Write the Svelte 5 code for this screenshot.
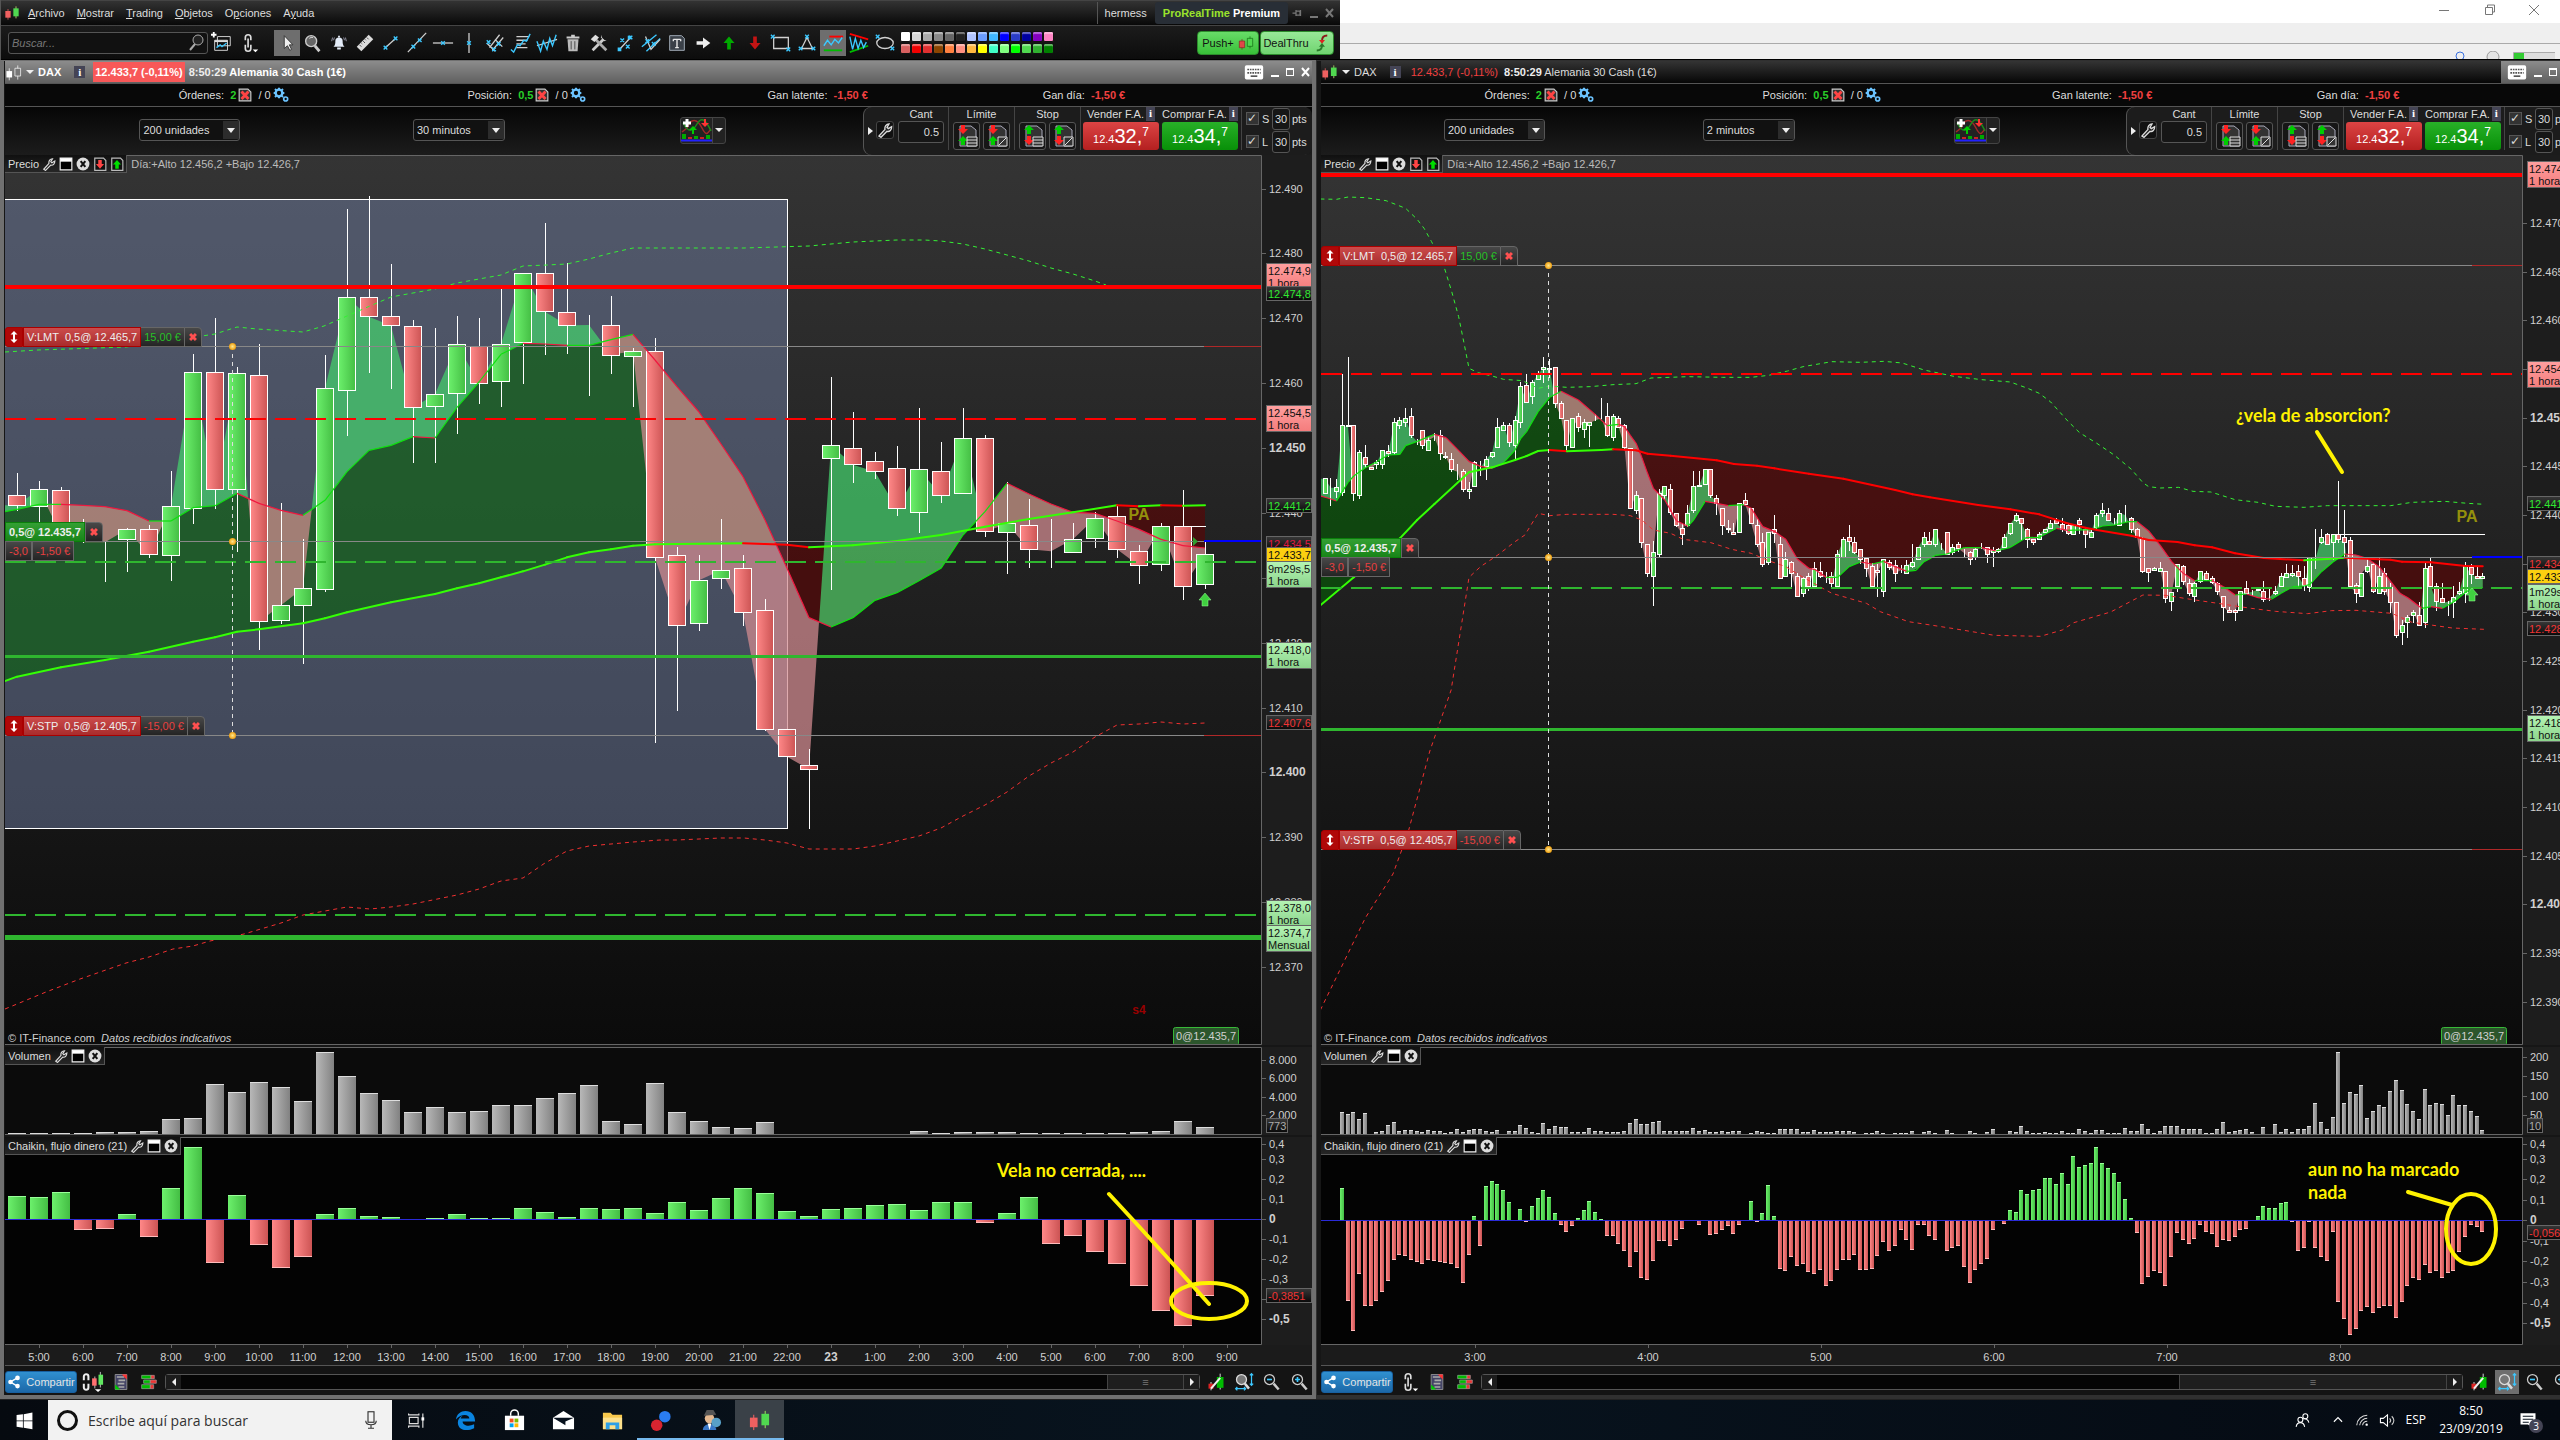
<script lang="ts">
	type Point = [number, number]
	type Candle = { high: number; top: number; bottom: number; low: number; dir: string }
	type Tag = { y: number; lines: string[]; kind: string }

	// Prices are kept in ticks, three to a pixel, counted down from BASE
	const BASE = 170
	const ty = (t: number) => BASE + t / 3

	const parseCandles = (text: string): Candle[] =>
		text
			.trim()
			.split(/\s*,\s*/)
			.map((row) => {
				const [h, t, b, l, dir] = row.trim().split(' ')
				return { high: +h, top: +t, bottom: +b, low: +l, dir }
			})

	const parsePoints = (text: string): Point[] =>
		text
			.trim()
			.split(/\s+/)
			.map((p) => p.split(',').map(Number) as Point)

	const parseNumbers = (text: string) => text.trim().split(/\s+/).map(Number)

	const shift = (list: Candle[], by: number) =>
		list.map((c) => ({ ...c, high: c.high + by, top: c.top + by, bottom: c.bottom + by, low: c.low + by }))

	function at(points: Point[], i: number) {
		if (i <= points[0][0]) return points[0][1]
		for (let k = 1; k < points.length; k++) {
			const [x1, y1] = points[k]
			const [x0, y0] = points[k - 1]
			if (i <= x1) return y0 + ((y1 - y0) * (i - x0)) / (x1 - x0)
		}
		return points[points.length - 1][1]
	}

	// Closed shapes between two curves, cut where they cross
	function between(xs: number[], a: number[], b: number[]) {
		const shapes: { up: boolean; d: string }[] = []
		let upper: string[] = []
		let lower: string[] = []
		let up = a[0] <= b[0]
		const close = () => {
			if (upper.length > 1) shapes.push({ up, d: 'M' + [...upper, ...lower.reverse()].join('L') + 'Z' })
			upper = []
			lower = []
		}
		for (let k = 0; k < xs.length; k++) {
			if (k > 0 && a[k] <= b[k] !== up) {
				const d0 = a[k - 1] - b[k - 1]
				const d1 = a[k] - b[k]
				const s = d0 / (d0 - d1)
				const x = xs[k - 1] + (xs[k] - xs[k - 1]) * s
				const y = a[k - 1] + (a[k] - a[k - 1]) * s
				upper.push(`${x},${y}`)
				close()
				up = !up
				upper.push(`${x},${y}`)
			}
			upper.push(`${xs[k]},${a[k]}`)
			lower.push(`${xs[k]},${b[k]}`)
		}
		close()
		return shapes
	}

	const leftCandles = parseCandles(`909 976 1006 1022 r,933 958 1010 1062 g,951 961 1095 1110 r,1047 1117 1117 1119 d,
1113 1117 1117 1235 d,1073 1078 1109 1206 g,1065 1078 1154 1163 r,903 1009 1157 1233 g,551 607 1015 1062 g,
444 607 959 1017 r,591 610 959 1146 g,521 616 1355 1440 r,999 1306 1352 1361 g,1107 1255 1307 1482 g,
555 655 1258 1266 g,117 382 661 798 g,78 382 440 609 r,282 439 467 657 r,450 469 713 879 r,474 673 710 879 g,
438 523 671 792 g,444 529 640 702 r,357 523 635 711 g,310 310 518 641 g,158 310 425 555 r,278 427 466 552 r,
435 465 465 678 d,378 465 554 612 r,535 544 560 711 g,504 544 1163 1719 r,1132 1156 1366 1623 r,
1155 1231 1361 1383 g,1047 1201 1225 1257 g,1155 1195 1328 1368 r,1287 1321 1678 1682 r,1678 1678 1760 1762 r,
1737 1786 1798 1977 r,621 826 866 1260 g,726 835 884 939 r,846 874 905 927 r,828 895 1016 1038 r,
714 898 1027 1088 g,816 904 976 999 r,714 805 970 970 g,795 805 1085 1101 r,936 1061 1087 1212 g,
987 1066 1138 1194 r,1047 1144 1144 1194 d,1059 1108 1147 1147 g,1027 1045 1105 1134 g,1009 1039 1138 1164 r,
1125 1144 1187 1242 r,1059 1070 1183 1203 g,960 1070 1249 1290 r,1111 1153 1244 1257 g`)

	const rightCandles = [
		...parseCandles(`924 926 970 970 g,924 953 953 1007 d,926 953 966 983 g,612 767 967 977 g,561 767 770 770 r,
767 767 970 992 r,841 848 976 987 g,825 862 884 895 r,890 891 898 900 r,870 878 884 896 g,840 842 884 898 g,
826 843 850 860 r,744 758 848 856 g,740 752 766 778 g,714 745 758 770 g,714 740 796 803 r,808 815 815 826 d,
780 781 826 838 r,800 811 841 843 g,788 800 800 812 d,780 796 849 870 r,845 858 861 866 r,850 868 899 907 r,
883 905 905 930 d,898 905 959 967 r,936 958 964 987 g,873 876 949 950 g,874 893 893 917 d,858 868 890 930 g,
845 848 861 865 g,744 772 832 835 g,757 766 780 782 g,760 767 818 832 r,739 752 827 870 g,636 650 758 773 g,
612 645 695 698 r,630 638 680 702 g,604 613 628 630 g,561 592 598 640 g,567 595 598 625 g,591 592 700 714 r,
694 700 745 748 r,750 752 827 843 r,744 746 832 835 g,730 740 772 785 r,748 758 780 803 g,755 758 766 832 g,
732 751 751 754 d,684 744 744 748 d,698 740 796 800 r,732 740 803 812 g,738 746 772 775 r,762 767 832 838 r,
835 836 1015 1018 r,963 976 1021 1032 g,985 986 1117 1135 r,1122 1123 1210 1222 r,1112 1148 1219 1307 g,
958 970 1153 1164 g,949 950 976 990 g,943 958 1028 1034 r,1030 1031 1066 1070 r,1060 1075 1092 1124 r,
1005 1030 1067 1070 g,904 949 1021 1030 g,904 945 948 949 g,896 899 943 946 g,897 899 976 983 r,
976 986 1000 1034 r,1014 1015 1066 1096 r,1050 1076 1079 1088 r,1060 1088 1093 1094 r,1000 1001 1088 1088 g,
969 991 1004 1006 r,1014 1015 1060 1062 r,1045 1066 1123 1130 r,1090 1118 1184 1190 r,1086 1088 1177 1185 g,
1035 1079 1090 1120 r,1102 1122 1225 1226 r,1147 1168 1219 1222 g,1173 1177 1210 1256 r,1210 1220 1279 1280 r,
1222 1225 1271 1280 g,1210 1219 1250 1264 r,1176 1195 1250 1250 g,1175 1205 1219 1225 r,1205 1222 1222 1240 d,
1205 1220 1241 1250 r,1140 1153 1249 1250 g,1101 1109 1162 1165 g,1065 1103 1116 1143 r,1102 1118 1147 1153 r,
1137 1138 1168 1183 r,1162 1164 1195 1222 r,1178 1190 1250 1252 r,1183 1200 1205 1280 r,1167 1168 1265 1280 g,
1169 1178 1192 1200 r,1170 1186 1210 1235 r,1186 1200 1200 1208 d,1170 1185 1210 1211 g,1122 1178 1190 1193 g,
1130 1132 1168 1170 g,1086 1103 1124 1132 g,1087 1115 1124 1125 r,1077 1079 1123 1130 g`),
		...shift(
			parseCandles(`640 650 650 660 d,606 607 672 675 r,642 652 668 676 g,636 644 656 665 r,657 670 670 680 d,
664 667 688 704 r,655 658 682 690 g,640 653 653 657 d,651 653 673 698 r,652 660 666 710 g,655 658 665 668 r,
612 622 652 655 g,579 581 612 614 g,548 557 572 575 g,563 566 580 632 r,595 598 628 654 r,627 629 637 644 r,
605 613 628 630 g,596 598 608 610 g,570 580 595 596 g,563 572 580 582 r,564 582 598 606 r,580 585 608 614 r,
583 586 612 614 g,564 572 584 612 r,590 598 614 654 r,596 607 622 624 g,548 557 594 598 g,519 542 550 560 g,
534 550 570 572 r,565 582 582 584 d,540 550 586 587 g,525 556 556 575 d,562 565 598 608 r,594 597 620 623 r,
620 625 724 730 r,714 716 728 755 r,712 716 722 724 g,696 715 724 726 g,724 725 806 818 r,785 786 814 842 g,
702 704 770 786 g,706 710 754 764 r,747 760 790 798 r,755 760 798 815 g,724 725 755 760 g,724 731 748 753 r,
738 745 758 762 r,756 760 784 794 r,797 799 832 872 r,832 842 847 850 r,836 842 848 872 r,782 785 841 842 g,
752 775 790 793 r,780 785 785 797 d,774 778 782 784 g,752 785 808 815 r,775 802 802 812 d,768 784 791 794 g,
729 740 770 772 g,702 731 744 745 g,704 731 738 740 g,706 724 740 770 r,708 746 768 784 r,682 683 774 786 g,
597 685 685 716 d,597 622 636 642 g,608 613 643 645 r,613 614 637 690 g,453 614 629 640 r,540 622 636 682 r,
622 630 769 772 r,758 767 790 818 r,728 730 798 800 g,688 709 725 730 g,700 704 784 790 r,684 740 790 792 g,
715 730 784 794 r,760 773 817 850 r,816 818 916 923 r,870 886 907 944 g,855 863 878 923 g,840 848 856 880 g,
817 856 887 888 r,697 715 878 893 g,684 710 770 772 r,760 770 815 842 r,760 806 818 820 r,812 815 815 858 d,
768 803 818 864 g,755 784 790 794 g,697 710 790 818 g,702 711 731 762 r,709 740 745 748 r,729 739 745 746 g`),
			480
		)
	]

	const charts = [
		{
			name: 'left',
			active: true,
			x: 5,
			right: 1261,
			width: 1307,
			x0: 17,
			step: 22,
			half: 9,
			frame: '30 minutos',
			candles: leftCandles,
			fast: parsePoints(`-.55,1025 0,1018 1,1003 2,1003 3,1006 4,1010 5,1022 6,1053 7,1053 8,1013 9,1007 10,970
11,1000 12,1021 13,1036 14,991 15,905 16,841 17,826 18,800 19,804 20,712 21,636 22,553 23,520 24,522 25,526
26,526 27,509 28,493 29,570 30,650 31,726 32,822 33,920 34,1050 35,1195 36,1343 37,1371 38,1343 39,1291
40,1268 41,1232 42,1195 43,1095 44,1025 45,940 46,972 47,1002 48,1027 49,1030 50,1053 51,1078 52,1108
53,1127 54,1134`),
			slow: parsePoints(`-.55,1533 0,1520 2,1492 4,1470 6,1445 8,1415 9,1402 10,1385 11,1378 13,1360 14,1345
15,1327 17,1297 19,1272 20,1255 21,1240 22,1222 23,1204 24,1184 25,1162 26,1147 27,1138 28,1127 29,1123
31,1121 33,1120 34,1122 35,1124 36,1132 38,1126 40,1113 42,1095 44,1070 46,1047 48,1027 50,1006 51,1009
52,1006 53,1007 54,1006`),
			upper: `5,352 38,350 126,347 202,336 215,334 237,327 257,329 303,332 324,326 347,316 370,306 391,297
435,289 457,283 501,275 523,266 547,265 567,264 589,259 611,253 633,248 744,248 809,246 853,242 897,240
924,240 941,241 963,244 985,249 1007,255 1029,261 1051,268 1073,274 1095,281 1106,285`,
			lower: `5,1009 46,992 80,979 126,963 149,957 173,949 193,946 210,941 244,934 281,923 303,915 325,911
347,907 370,909 391,907 413,904 457,895 479,889 501,881 523,878 545,863 567,851 589,846 611,844 633,842
660,840 677,840 699,839 721,838 744,838 765,840 787,843 809,849 853,849 875,846 897,841 919,836 941,828
963,816 985,805 1007,792 1029,776 1051,763 1073,752 1095,737 1117,725 1139,724 1161,722 1183,724 1205,723`,
			levels: [
				{ y: 287, color: '#f00', w: 4, dash: '' },
				{ y: 419, color: '#f00', w: 2, dash: '21 9' },
				{ y: 562, color: '#2fb62f', w: 2, dash: '21 9' },
				{ y: 656.5, color: '#2fb62f', w: 3, dash: '' },
				{ y: 915, color: '#2fb62f', w: 2, dash: '21 9' },
				{ y: 937.5, color: '#2fb62f', w: 5, dash: '' }
			],
			orders: [346, 541, 735],
			orderX: 232,
			lastX: 1204,
			high: [1192, 526, 1206],
			axis: [
				[189, '12.490'], [253, '12.480'], [318, '12.470'], [383, '12.460'], [448, '12.450', 'b'],
				[513, '12.440'], [578, ''], [643, '12.420'], [708, '12.410'], [772, '12.400', 'b'], [837, '12.390'],
				[902, '12.380'], [967, '12.370']
			],
			tags: [
				{ y: 263, lines: ['12.474,9', '1 hora'], kind: 'pink' },
				{ y: 286, lines: ['12.474,8'], kind: 'dark-green' },
				{ y: 405, lines: ['12.454,5', '1 hora'], kind: 'pink' },
				{ y: 498, lines: ['12.441,2'], kind: 'dark-green' },
				{ y: 536, lines: ['12.434,5'], kind: 'dark-crimson' },
				{ y: 561, lines: ['9m29s,5', '1 hora'], kind: 'green' },
				{ y: 547, lines: ['12.433,7'], kind: 'yellow' },
				{ y: 642, lines: ['12.418,0', '1 hora'], kind: 'green' },
				{ y: 715, lines: ['12.407,6'], kind: 'dark-red' },
				{ y: 900, lines: ['12.378,0', '1 hora'], kind: 'green' },
				{ y: 925, lines: ['12.374,7', 'Mensual'], kind: 'green' }
			] as Tag[],
			pa: [1139, 520],
			arrow: [1205, 593],
			zeroBox: 1173,
			volume: parseNumbers(`4 4 4 4 7 7 10 46 48 150 127 156 142 99 246 174 123 102 66 81 66 69 87 87 108 123 147
39 30 153 66 39 21 18 36 0 0 0 0 0 0 10 4 7 7 7 4 4 4 4 4 7 10 39 21`),
			volumeAxis: [[1060, '8.000'], [1078, '6.000'], [1097, '4.000'], [1115, '2.000']],
			volumeTag: '773',
			zero: 1219,
			flow: parseNumbers(`69 67 81 -32 -29 15 -55 93 216 -133 72 -79 -146 -113 15 33 9 6 0 4 15 4 4 33 21 6 33 30
33 18 51 27 63 93 78 24 9 30 33 42 45 27 51 51 -13 18 66 -76 -52 -100 -136 -200 -275 -322 -232`),
			flowAxis: [
				[1144, '0,4'], [1159, '0,3'], [1179, '0,2'], [1199, '0,1'], [1219, '0', 'b'], [1239, '-0,1'],
				[1259, '-0,2'], [1279, '-0,3'], [1299, ''], [1319, '-0,5', 'b']
			],
			flowTag: { y: 1288, lines: ['-0,3851'], kind: 'dark-red' },
			first: 0,
			times: [
				'5:00', '6:00', '7:00', '8:00', '9:00', '10:00', '11:00', '12:00', '13:00', '14:00', '15:00', '16:00',
				'17:00', '18:00', '19:00', '20:00', '21:00', '22:00', '23', '1:00', '2:00', '3:00', '4:00', '5:00',
				'6:00', '7:00', '8:00', '9:00'
			].map((t, i) => [39 + i * 44, t]),
			thumb: 77
		},
		{
			name: 'right',
			active: false,
			x: 1321,
			right: 2522,
			width: 1254,
			x0: 1325,
			step: 5.76,
			half: 2,
			frame: '2 minutos',
			candles: rightCandles,
			fast: parsePoints(`-.8,978 .5,984 2,993 3,965 4,937 5,918 7,893 9,875 11,855 13,853 14,827 16,814 19,793
21,803 23,838 25,874 27,889 29,895 31,878 33,840 34,805 35,785 37,725 39,682 41,664 44,690 46.5,727 49,767
51,763 52,770 53,796 54,820 55,862 56,910 57,955 59,990 61,1052 63,1069 64,1050 66,994 68,1000 70,1007
72.7,1004 74,1015 76,1070 78,1084 80,1108 82,1167 84,1195 85,1198 87,1222 89,1222 91,1190 93,1176 95,1182
97,1174 99,1190 101,1204 102.6,1201 104,1175 105,1166 106,1156 108,1152 111,1133 114,1133 116.5,1143
119,1132 121.7,1103 124,1102 127,1075 129,1081 133,1079 135,1068 137,1065 139.5,1055 141,1055 143,1083
145,1126 147,1175 149,1210 151,1232 154,1232 156,1250 158,1275 160,1272 162,1283 164.3,1288 166,1270
168,1250 170,1248 171,1243 173,1205 175,1176 177,1152 179,1155 181,1166 183,1190 185,1234 186.6,1270
188,1283 190.4,1315 192,1310 194,1315 196,1295 198,1267 199,1256 201,1253`),
			slow: parsePoints(`-.8,1306 5,1222 13,1105 16,1050 19,1002 25,907 29,892 33,870 35,858 37,843 39,840
42,844 48,840 50,838 52,839 54,841 56,851 60,857 68,871 71,882 75,887 78,895 84,911 90,926 95,945 99,960
102,973 105,982 113.4,1005 119,1018 124,1033 128.7,1059 132,1073 134,1080 140,1097 143,1110 148,1116
151,1126 154,1132 158,1150 163,1164 170,1171 174,1167 177,1163 182,1167 185,1169 187,1175 192,1177
198,1188 201,1189`),
			upper: '',
			lower: '',
			upperPoints: parsePoints(`-.8,87 2,88 4,81 7,83 10.6,92 14,115 16,148 17.2,175 18.5,215 20.7,292 22,365
23.2,440 24.2,525 25,595 26.6,608 29,618 31,628 34.3,632 37,655 39,648 42,652 46,650 50,644 54,641
56.6,624 63,620 69,622 74,622 77,616 80.3,603 83,590 88,575 93,577 97,574 100.2,579 104,600 109.2,619
114,629 119,636 122,655 124,670 126,696 129,754 131,788 134,820 137,855 140,898 142,938 143,950 145,954
148.2,952 150.7,964 153.8,966 158,989 162,997 165,1009 170,1012 174,1007 185,1007 188.7,997 194.3,994
198.4,1000 201.3,1003`),
			lowerPoints: parsePoints(`-.8,2520 7,2244 11.8,2112 14.4,1989 18.2,1743 21.9,1560 25,1222 27,1190 30,1155
33,1115 34.7,1095 37,1030 39,1037 42,1033 50,1033 53,1037 55,1050 57,1080 60,1090 62.2,1108 67,1118
70.6,1138 74,1150 77,1172 80,1190 83,1222 88,1270 94,1300 96.4,1325 101.3,1355 105.5,1366 109.2,1376
116.2,1396 124.2,1399 128,1380 130,1358 136.4,1326 142,1275 146,1276 150.3,1288 155,1300 160.8,1315
165,1324 170.6,1331 174.7,1322 179,1321 185.2,1330 188.7,1357 195.7,1374 201.3,1378`),
			levels: [
				{ y: 175, color: '#f00', w: 4, dash: '' },
				{ y: 374, color: '#f00', w: 2, dash: '21 9' },
				{ y: 588, color: '#2fb62f', w: 2, dash: '21 9' },
				{ y: 729.5, color: '#2fb62f', w: 3, dash: '' }
			],
			orders: [265, 557, 849],
			orderX: 1548,
			lastX: 2472,
			high: [2333, 534, 2485],
			axis: [
				[223, '12.470'], [272, '12.465'], [320, '12.460'], [369, ''], [418, '12.450', 'b'], [466, '12.445'],
				[515, '12.440'], [564, ''], [612, '12.430'], [661, '12.425'], [710, '12.420'], [758, '12.415'],
				[807, '12.410'], [856, '12.405'], [904, '12.400', 'b'], [953, '12.395'], [1002, '12.390']
			],
			tags: [
				{ y: 161, lines: ['12.474,9', '1 hora'], kind: 'pink' },
				{ y: 361, lines: ['12.454,5', '1 hora'], kind: 'pink' },
				{ y: 496, lines: ['12.441,0'], kind: 'dark-green' },
				{ y: 556, lines: ['12.434,6'], kind: 'dark-red' },
				{ y: 584, lines: ['1m29s,5', '1 hora'], kind: 'green' },
				{ y: 569, lines: ['12.433,7'], kind: 'yellow' },
				{ y: 621, lines: ['12.428,3'], kind: 'dark-red' },
				{ y: 715, lines: ['12.418,0', '1 hora'], kind: 'green' }
			] as Tag[],
			pa: [2467, 522],
			arrow: [2472, 588],
			zeroBox: 2441,
			volume: parseNumbers(`67 60 67 46 63 0 6 10 27 36 10 13 13 10 7 13 10 10 4 7 16 6 12 15 15 10 7 12 0 9 9 28
18 7 4 33 16 24 21 21 7 7 7 18 10 10 7 7 7 10 33 45 30 30 36 39 10 10 10 10 10 18 10 12 6 7 10 7 10 10 0 4
10 7 4 4 15 15 15 15 7 7 13 7 7 7 10 9 10 7 0 4 4 10 4 0 4 4 4 10 0 7 10 4 0 12 4 0 0 10 4 0 7 15 0 0 10 7
24 10 4 4 7 4 4 10 4 4 15 10 4 13 12 4 4 4 18 10 10 30 15 4 10 25 25 25 16 15 15 15 4 4 15 36 7 10 13 15 7
0 22 0 30 7 15 7 15 15 24 94 36 15 51 246 94 127 121 148 49 70 87 82 130 162 132 90 70 45 135 87 93 90 57
118 87 87 70 55 12`),
			volumeAxis: [[1057, '200'], [1076, '150'], [1096, '100'], [1115, '50']],
			volumeTag: '10',
			zero: 1220,
			flow: parseNumbers(`97 -244 -334 -163 -259 -259 -244 -217 -184 -121 -106 -109 -121 -127 -133 -121 -124 -127
-130 -133 -145 -190 -106 13 -79 103 118 109 91 55 0 34 -7 43 67 91 70 22 -16 -37 -19 7 31 58 25 3 -49 -49
-73 -94 -142 -97 -175 -181 -124 -64 -64 -79 -61 -28 -4 -4 -16 -4 -46 -43 -31 -19 -43 -16 0 58 -7 22 106 13
-148 -154 -112 -139 -133 -157 -163 -151 -199 -184 -151 -121 -121 -106 -151 -151 -148 -109 -67 -94 -79 -31
-61 -91 -16 -16 -49 -61 0 -94 -85 -79 -142 -190 -151 -133 -118 -31 0 -13 31 25 91 79 91 94 127 127 109 142
109 193 160 166 172 220 172 157 142 115 64 7 -40 -193 -172 -154 -160 -199 -112 -40 -61 -73 -58 -16 -37 -43
-82 -61 -64 -52 -31 -28 -4 13 43 37 37 52 55 -7 -94 -85 -7 -85 -112 -124 -37 -247 -298 -346 -328 -274 -262
-280 -265 -259 -259 -295 -247 -199 -175 -181 -136 -160 -154 -175 -160 -154 -97 -52 -16 -22 -37`),
			flowAxis: [
				[1144, '0,4'], [1159, '0,3'], [1179, '0,2'], [1200, '0,1'], [1220, '0', 'b'], [1241, '-0,1'],
				[1261, '-0,2'], [1282, '-0,3'], [1303, '-0,4'], [1323, '-0,5', 'b']
			],
			flowTag: { y: 1225, lines: ['-0,0561'], kind: 'dark-red' },
			first: 3,
			times: ['3:00', '4:00', '5:00', '6:00', '7:00', '8:00'].map((t, i) => [1475 + i * 173, t]),
			thumb: 268
		}
	].map((c: any) => {
		const cx = (i: number) => c.x0 + c.step * i
		const idx = [-0.7, ...c.candles.map((_: Candle, i: number) => i)]
		const closes = c.candles.map((k: Candle) => (k.dir === 'r' ? k.bottom : k.top))
		const price = [closes[0], ...closes].map(ty)
		const fast = idx.map((i) => ty(at(c.fast, i)))
		const slow = idx.map((i) => ty(at(c.slow, i)))
		const xs = idx.map((i) => Math.max(c.x, cx(i)))
		const page = (p: Point[]) => p.map(([i, t]) => [cx(i), ty(t)])
		const join = (p: Point[]) => page(p).map((q) => q.join(',')).join(' ')
		return {
			...c,
			cx,
			trend: between(xs, fast, slow),
			swing: between(xs, price, fast),
			fastLine: page(c.fast),
			slowLine: page(c.slow),
			upper: c.upperPoints ? join(c.upperPoints) : c.upper,
			lower: c.lowerPoints ? join(c.lowerPoints) : c.lower
		}
	})

	const menus = ['Archivo', 'Mostrar', 'Trading', 'Objetos', 'Opciones', 'Ayuda']
	const hotkeys = [0, 0, 0, 0, 1, 1]

	const palette = [
		'#fff', '#d8d8d8', '#aaa', '#888', '#666', '#222', '#b0c4ff', '#6a9cff', '#40b8ff', '#00f', '#2a3cc8', '#0000a0',
		'#8400c0', '#ff84c4', '#d86060', '#f00000', '#e03030', '#8a4400', '#ff8040', '#ff9080', '#ffb840', '#ffff00',
		'#40ffc8', '#80ff80', '#00ff00', '#50d850', '#30b030', '#008000'
	]

	const cross = (x: number, y: number) => `M${x - 2} ${y - 2}l4 4m0-4l-4 4`
	const blue = 'stroke="#3cc8ff" stroke-width="1.5" fill="none"'
	const grey = 'stroke="#d0d0d0" stroke-width="1.4" fill="none"'
	const icons: Record<string, string> = {
		cursor: '<path d="M9 4v14l3.500-3 2.500 5 2-1-2.500-5h4z" fill="#eee" stroke="#333"/>',
		lens: '<circle cx="10" cy="10" r="6" fill="#666" stroke="#ccc" stroke-width="1.500"/><path d="M8 7a4 4 0 0 1 4-1" stroke="#ddd" fill="none"/><path d="M14 15l5 6" stroke="#ccc" stroke-width="3"/>',
		bell: '<path d="M6 16c2-2 2-4 2-6a4 4 0 0 1 8 0c0 2 0 4 2 6z" fill="#e4ecf8"/><path d="M10 18h4M12 4v2" stroke="#e4ecf8" stroke-width="2"/><path d="M5 6l-1 4m2-1l1-3m12 0l1 4m-2-1l-1-3" stroke="#99a" fill="none"/>',
		ruler: '<path d="M3 16L16 3l5 5L8 21z" fill="#ddd"/><path d="M6 14l2 2m0-4l1 1m1-3l2 2m0-4l1 1m1-3l2 2" stroke="#444"/>',
		segment: `<path d="M6 17L17 7" ${grey}/><path d="${cross(6, 17)}${cross(17, 7)}" ${blue}/>`,
		ray: `<path d="M2 22L22 1" ${grey}/><path d="${cross(8, 16)}${cross(15, 9)}" ${blue}/>`,
		hline: `<path d="M1 12h22" ${grey}/><path d="${cross(12, 12)}" ${blue}/>`,
		vline: `<path d="M12 1v22" ${grey}/><path d="${cross(12, 12)}" ${blue}/>`,
		fork: `<path d="M6 17L17 3M9 20L21 6M3 12l9 9M12 8l8 8" ${grey}/><path d="${cross(5, 11)}${cross(11, 19)}${cross(16, 13)}" ${blue}/>`,
		regress: `<path d="M7 5h14M7 9h12M7 13h10M7 17h12" ${grey}/><path d="M1 19l3 3 4-8 3 1 4-6 3 1 4-8" ${blue}/>`,
		waves: `<path d="M1 15L23 8" ${grey}/><path d="M1 10l4 11 3-11 4 9 3-12 3 8 4-12" ${blue}/>`,
		trash: '<path d="M6 8h12l-1 13H7z" fill="#bbb"/><path d="M5 6h14M10 4h4" stroke="#ccc" stroke-width="2"/><path d="M10 10v9m4-9v9" stroke="#444"/>',
		tools: '<path d="M5 20L17 8" stroke="#ccc" stroke-width="3"/><path d="M15 3a5 5 0 0 0 6 6l-3 1-4-4z" fill="#ccc"/><path d="M8 8l12 12" stroke="#aaa" stroke-width="3"/><path d="M3 8l5-5 4 3-5 5z" fill="#ddd"/>',
		handles: `<path d="M7 18L18 6" ${grey}/><path d="${cross(9, 9)}${cross(15, 16)}${cross(18, 6)}" ${blue}/><path d="M4 17h4v4H4zM15 4h4v4h-4z" fill="#3cc8ff"/>`,
		channel: `<path d="M2 16L18 3M7 21L22 7" ${blue}/><path d="M6 5l6 14 10-11" ${grey}/><path d="${cross(8, 10)}${cross(15, 13)}" ${blue}/>`,
		text: '<path d="M4 4h13l3 3v13H4z" fill="#3a4048" stroke="#a8b4c0"/><path d="M8 8h8M12 8v9M10 17h4M8 8v2m8-2v2" stroke="#e8e8e8" stroke-width="1.500"/>',
		right: '<path d="M5 10h7V6l8 6-8 6v-4H5z" fill="#eee"/>',
		up: '<path d="M12 5l6 7h-4v7h-4v-7H6z" fill="#0a0"/>',
		down: '<path d="M12 19l6-7h-4V5h-4v7H6z" fill="#c41414"/>',
		box: `<path d="M4 6h16v12H4z" ${grey}/><path d="${cross(3, 5)}${cross(20, 19)}" ${blue}/>`,
		triangle: `<path d="M12 6l6 12H6z" ${grey}/><path d="${cross(12, 5)}${cross(5, 18)}${cross(19, 18)}" ${blue}/>`,
		pattern: '<path d="M8 5h15" stroke="#f00" stroke-width="2"/><path d="M2 20h20" stroke="#0b0" stroke-width="2"/><path d="M2 15l4-6 4 5 4-6 4 4 4-6" stroke="#3cc8ff" stroke-width="1.500" fill="none"/>',
		wedge: '<path d="M2 2l20 6" stroke="#f00" stroke-width="2"/><path d="M2 22l20-7" stroke="#0b0" stroke-width="2"/><path d="M2 5l3 14 3-12 3 11 3-9 3 8 3-6" stroke="#3cc8ff" stroke-width="1.500" fill="none"/>',
		ellipse: `<ellipse cx="12" cy="12" rx="9" ry="6" ${grey}/><path d="${cross(4, 5)}${cross(20, 18)}" ${blue}/>`,
		windows: '<path d="M7 5h14v10H7zM4 9h14v11H4z" fill="#111" stroke="#ddd"/><path d="M4 10h14" stroke="#ddd" stroke-width="2"/><path d="M6 17l4-3 2 2 5-4" stroke="#3cc8ff" fill="none" stroke-width="1.500"/><path d="M3 0v6M0 3h6" stroke="#fff" stroke-width="2"/>',
		link: '<path d="M8 9V6a3 3 0 0 1 6 0v3M8 14v4a3 3 0 0 0 6 0v-4M11 7v10" fill="none" stroke="#ddd" stroke-width="1.800"/><path d="M16 19h6l-3 3z" fill="#fff"/>',
		linkCandles: '<path d="M2 10V6a2.500 2.500 0 0 1 5 0v4M2 14v4a2.500 2.500 0 0 0 5 0v-4" fill="none" stroke="#eee" stroke-width="2.200"/><path d="M14 6v13M20 1v17" stroke="#ccc"/><path d="M11 8h5v8h-5z" fill="#ff7070"/><path d="M18 4h5v11h-5z" fill="#60e860"/><path d="M14 20h7l-3.500 3z" fill="#fff"/>',
		candles: '<path d="M6 6v16M18 2v18" stroke="#f66"/><path d="M18 2v18" stroke="#5d5"/><path d="M2 9h8v10H2z" fill="#f06060"/><path d="M14 5h8v12h-8z" fill="#50d850"/>',
		candlesPush: '<path d="M6 6v16" stroke="#822"/><path d="M18 2v18" stroke="#161"/><path d="M2 9h8v10H2z" fill="#e04848" stroke="#822"/><path d="M14 5h8v12h-8z" fill="#50d850" stroke="#161"/>',
		candlesWhite: '<path d="M6 6v17M18 2v20" stroke="#fff"/><path d="M2 10h8v9H2z" fill="#fff"/><path d="M14 6h8v11h-8z" fill="#777" stroke="#fff"/>',
		share: '<path d="M19 4L6 12l13 8" fill="none" stroke="#fff" stroke-width="2.500"/><circle cx="18" cy="5" r="4" fill="#fff"/><circle cx="6" cy="12" r="4" fill="#fff"/><circle cx="18" cy="19" r="4" fill="#fff"/>',
		wrench: '<path d="M3 21l9-10c-1-4 2-8 6-8l-3 5 2 2 5-3c0 5-3 8-7 7L6 23z" fill="#222" stroke="#ddd" stroke-width="2"/>',
		pane: '<path d="M2 2h20v20H2z" fill="#000" stroke="#eee" stroke-width="2"/><path d="M2 5h20" stroke="#fff" stroke-width="6"/>',
		closePane: '<circle cx="12" cy="12" r="11" fill="#ddd"/><path d="M8 7l8 10m0-10L8 17" stroke="#111" stroke-width="3.500"/>',
		sellDoc: '<path d="M3 2h15l4 4v17H3z" fill="#111" stroke="#bbb" stroke-width="2"/><path d="M12 20l7-8h-4V5H9v7H5z" fill="#f44"/>',
		buyDoc: '<path d="M3 2h15l4 4v17H3z" fill="#111" stroke="#bbb" stroke-width="2"/><path d="M12 5l7 8h-4v7H9v-7H5z" fill="#0d0"/>',
		cancel: '<path d="M2 2h15l5 5v15H2z" fill="#333" stroke="#ccc" stroke-width="2"/><path d="M6 6l12 13m0-13L6 19" stroke="#f44" stroke-width="5"/>',
		gears: '<circle cx="9" cy="9" r="5" fill="none" stroke="#6cc4ff" stroke-width="3.500"/><path d="M9 1v3m0 10v3M1 9h3m10 0h3M3 3l2 2m8 8l2 2m0-12l-2 2M3 15l2-2" stroke="#6cc4ff" stroke-width="3"/><circle cx="19" cy="18" r="3" fill="none" stroke="#6cc4ff" stroke-width="2.500"/>',
		limitA: '<path d="M5 2h11l5 4v16H5z" fill="#333" stroke="#aab"/><path d="M8 10l5-5h-3V1H6v4H3z" fill="#f22"/><path d="M8 12l5 5h-3v4H6v-4H3z" fill="#0c0"/><path d="M12 13h10v9H12zM12 16h10M12 19h10" fill="#333" stroke="#ddd"/>',
		limitB: '<path d="M5 2h11l5 4v16H5z" fill="#333" stroke="#aab"/><path d="M8 10l5-5h-3V1H6v4H3z" fill="#f22"/><path d="M8 12l5 5h-3v4H6v-4H3z" fill="#0c0"/><path d="M13 13h9v9h-9zM14 21l7-7" fill="#333" stroke="#ddd"/>',
		stopA: '<path d="M5 2h11l5 4v16H5z" fill="#333" stroke="#aab"/><path d="M8 1l5 5h-3v4H6V6H3z" fill="#0c0"/><path d="M8 21l5-5h-3v-4H6v4H3z" fill="#f22"/><path d="M12 13h10v9H12zM12 16h10M12 19h10" fill="#333" stroke="#ddd"/>',
		stopB: '<path d="M5 2h11l5 4v16H5z" fill="#333" stroke="#aab"/><path d="M8 1l5 5h-3v4H6V6H3z" fill="#0c0"/><path d="M8 21l5-5h-3v-4H6v4H3z" fill="#f22"/><path d="M13 13h9v9h-9zM14 21l7-7" fill="#333" stroke="#ddd"/>',
		indicator: '<path d="M1 14L6 10c4-10 10-10 15 0s6 4 9 1" fill="none" stroke="#a02828" stroke-width="1.500"/><path d="M2 5c6 11 10 8 14 1s8-6 14 7" fill="none" stroke="#1a8a1a" stroke-width="1.500"/><path d="M6 1v8M2 5h8" stroke="#fff" stroke-width="3"/><path d="M24 9l4-4h-3V1h-2v4h-3z" fill="#f33"/><path d="M12 8l4 4h-3v4h-2v-4H8z" fill="#0c0"/><path d="M1 16h4v5H1zM13 18h4v3h-4zM25 17h4v4h-4z" fill="#0a0"/><path d="M7 19h4v2H7zM19 19h4v2h-4z" fill="#c22"/><path d="M0 22.500h31" stroke="#22f" stroke-width="2"/>',
		report: '<path d="M5 3h14v18H5z" fill="#446" stroke="#999"/><path d="M7 6h9M9 10h8M8 14h8M9 18h7" stroke="#aaa" stroke-width="2"/><path d="M19 3l-6 0 6 6z" fill="#f33"/><path d="M5 21v-6l6 6z" fill="#0c0"/>',
		book: '<path d="M1 2h14v5H1zM4 9h10v5H4zM1 16h13v6H1z" fill="#0b0" stroke="#9a9"/><path d="M15 2h5v5h-5zM14 9h9v5h-9zM14 16h5v6h-5z" fill="#e33" stroke="#a99"/>',
		settings: '<path d="M6 12v10M17 2v19" stroke="#fff"/><path d="M3 14h6v6H3z" fill="#d22"/><path d="M13 6h8v13h-8z" fill="#0b0"/><path d="M6 20L17 7" stroke="#eee" stroke-width="2.500"/>',
		zoomFit: '<circle cx="9" cy="9" r="6" fill="#777" stroke="#ddd" stroke-width="1.500"/><path d="M13 14l5 6" stroke="#ddd" stroke-width="3"/><path d="M21 2v14M19 4l2-2 2 2M19 14l2 2 2-2M2 20h12M4 18l-2 2 2 2m8-4l2 2-2 2" stroke="#3cc8ff" fill="none" stroke-width="1.500"/>',
		zoomOut: '<circle cx="9" cy="9" r="6" fill="#111" stroke="#ccc" stroke-width="1.500"/><path d="M14 14l6 7" stroke="#ccc" stroke-width="3"/><path d="M6 9h6" stroke="#3cc8ff" stroke-width="2"/>',
		zoomIn: '<circle cx="9" cy="9" r="6" fill="#111" stroke="#ccc" stroke-width="1.500"/><path d="M14 14l6 7" stroke="#ccc" stroke-width="3"/><path d="M6 9h6M9 6v6" stroke="#3cc8ff" stroke-width="2"/>',
		keyboard: '<rect x="1" y="4" width="22" height="17" rx="2" fill="#fff"/><path d="M4 9h16M4 13h16" stroke="#555" stroke-width="2" stroke-dasharray="2 1"/><path d="M8 17h8" stroke="#555" stroke-width="2"/>',
		start: '<path d="M2 5l8-1v8H2zM11 4l11-2v10H11zM2 13h8v8l-8-1zM11 13h11v10l-11-2z" fill="#fff"/>',
		taskview: '<path d="M3 8h11v8H3zM2 3v2h13V3M2 21v-2h13v2M20 3v18" fill="none" stroke="#ddd" stroke-width="1.500"/><path d="M20 8v4" stroke="#fff" stroke-width="3.500"/>',
		edge: '<path d="M2 11C3 5 7 2 12 2c6 0 10 4 10 11H9c0 4 6 6 12 3v4c-8 4-17 2-17-6 0-3 2-6 5-7-1 1-2 2-2 3h9c0-5-9-5-14 1z" fill="#0a84e0"/>',
		store: '<path d="M2 7h20v15H2z" fill="#fff"/><path d="M8 7V5a4 4 0 0 1 8 0v2" fill="none" stroke="#fff" stroke-width="1.500"/><path d="M7 10h4v4H7z" fill="#f25022"/><path d="M12 10h4v4h-4z" fill="#7fba00"/><path d="M7 15h4v4H7z" fill="#00a4ef"/><path d="M12 15h4v4h-4z" fill="#ffb900"/>',
		mail: '<path d="M1 9l11-7 11 7v12H1z" fill="#fff"/><path d="M1 9h22l-9 4v4z" fill="#06101c"/>',
		folder: '<path d="M2 4h8l2 2h10v15H2z" fill="#f8c84c"/><path d="M2 9h20v12H2z" fill="#fde08c"/><path d="M5 21v-7h14v7h-4v-4H9v4z" fill="#2ea0e8"/>',
		balls: '<circle cx="15.500" cy="8" r="6" fill="#2a7cf0"/><circle cx="7" cy="17" r="6" fill="#d82430"/>',
		agent: '<circle cx="11" cy="10" r="5" fill="#e4b890"/><path d="M5 7l3-6h7l3 5z" fill="#555"/><path d="M4 22c0-8 14-8 14 0z" fill="#3a78c8"/><circle cx="18" cy="14" r="5" fill="#58a0c8"/><path d="M9 15h4l-2 7z" fill="#fff"/>',
		people: '<g fill="none" stroke="#fff" stroke-width="1.500"><circle cx="16" cy="6" r="3.500"/><circle cx="9" cy="11" r="3.500"/><path d="M3 21c1-8 11-8 12 0M13 10c3-1 7 0 8 5"/></g>',
		chevron: '<path d="M5 15l7-7 7 7" fill="none" stroke="#fff" stroke-width="2"/>',
		wifi: '<path d="M3 21A18 18 0 0 1 21 4M8 21A13 13 0 0 1 21 9M13 21a8 8 0 0 1 8-7" fill="none" stroke="#ddd" stroke-width="1.800"/><circle cx="20" cy="20" r="2" fill="#fff"/>',
		speaker: '<path d="M2 9h4l6-5v16l-6-5H2z" fill="none" stroke="#fff" stroke-width="1.500"/><path d="M15 9c2 2 2 4 0 6m3-9c4 4 4 8 0 12" fill="none" stroke="#ccc" stroke-width="1.500"/>',
		mic: '<rect x="8" y="1" width="8" height="14" fill="none" stroke="#333" stroke-width="1.500"/><path d="M5 13c0 7 14 7 14 0M12 18v5M8 23h8" fill="none" stroke="#333" stroke-width="1.500"/>',
		note: '<path d="M2 3h20v15h-5v4l-5-4H2z" fill="#fff"/><path d="M5 7h14M5 11h14M5 15h8" stroke="#06101c" stroke-width="1.500"/>',
		flash: '<path d="M19 2c-5 0-7 2-7 7" fill="none" stroke="#8a1a1a" stroke-width="2.500"/><path d="M8 8h8l-4 5z" fill="#d22"/><path d="M8 17l4-5 4 5z" fill="#2a7a2a"/><path d="M12 15c0 5-2 7-7 7" fill="none" stroke="#2a7a2a" stroke-width="2.500"/>',
		pin: '<path d="M3 12h7M10 6v12M10 8h8v8h-8M19 6v12" fill="none" stroke="#777" stroke-width="2.500"/>',
		updown: '<path d="M12 0l7 7h-5v10h5l-7 7-7-7h5V7H5z" fill="#fff"/>',
		cross: '<path d="M5 5l14 14m0-14L5 19" stroke="#ff5050" stroke-width="7"/>'
	}

	const tools = [
		'cursor', 'lens', 'bell', 'ruler', 'segment', 'ray', 'hline', 'vline', 'fork', 'regress', 'waves', 'trash',
		'tools', 'handles', 'channel', 'text', 'right', 'up', 'down', 'box', 'triangle', 'pattern', 'wedge', 'ellipse'
	]

	const apps = ['taskview', 'edge', 'store', 'mail', 'folder', 'balls', 'agent', 'candles']
</script>

{#snippet icon(name: string, size = 14)}
	<svg class="icon" width={size} height={size} viewBox="0 0 24 24" aria-hidden="true">{@html icons[name]}</svg>
{/snippet}

{#snippet tagBox(c: any, tag: Tag)}
	<g class="tag {tag.kind}">
		<rect x={c.right + 5.5} y={tag.y + 0.5} width="45" height={tag.lines.length * 12 + 2} />
		{#each tag.lines as line, i}
			<text x={c.right + 7} y={tag.y + 12 + i * 12}>{line}</text>
		{/each}
	</g>
{/snippet}

{#snippet scale(c: any, rows: any[])}
	{#each rows as [y, label, bold]}
		<line class="tick" x1={c.right} x2={c.right + 5} y1={y + 0.5} y2={y + 0.5} />
		<text class="price" class:bold x={c.right + 8} y={y + 4}>{label}</text>
	{/each}
{/snippet}

{#snippet tab(label: string, price: boolean)}
	<div class="tab">
		<span>{label}</span>
		<button aria-label="Configurar">{@render icon('wrench')}</button>
		<button aria-label="Maximizar">{@render icon('pane')}</button>
		<button aria-label="Cerrar">{@render icon('closePane')}</button>
		{#if price}
			<button aria-label="Vender">{@render icon('sellDoc')}</button>
			<button aria-label="Comprar">{@render icon('buyDoc')}</button>
		{/if}
	</div>
{/snippet}

{#snippet order(y: number, label: string, gain: string, loss: boolean)}
	<div class="order" style:top="{y - 155 - 19}px">
		<span class="grip">{@render icon('updown', 12)}</span>
		<span class="what">{label}</span>
		<span class="gain" class:loss>{gain}</span>
		<button aria-label="Cancelar orden">{@render icon('cross', 10)}</button>
	</div>
{/snippet}

{#snippet closeMark()}
	<svg class="icon" width="9" height="10" viewBox="0 0 9 10"><path d="M1 1l7 8m0-8L1 9" stroke="currentColor" stroke-width="2" /></svg>
{/snippet}

{#snippet chartWindow(c: any)}
	<section class="window" class:active={c.active} class:wide={!c.active}>
		<header class="title">
			{@render icon(c.active ? 'candlesWhite' : 'candles', 17)}
			<span class="caret"></span>
			<span>DAX</span>
			<span class="info">i</span>
			<span class="quote">12.433,7 (-0,11%)</span>
			<span><b>8:50:29</b> Alemania 30 Cash (1€)</span>
			<div class="controls">
				{@render icon('keyboard', 20)}
				<button aria-label="Minimizar"><span class="min"></span></button>
				<button aria-label="Maximizar"><span class="max"></span></button>
				<button aria-label="Cerrar">{@render closeMark()}</button>
			</div>
		</header>

		<div class="account">
			<span>Órdenes: &nbsp;<b class="pos">2</b>{@render icon('cancel')} &nbsp;&nbsp;/ 0{@render icon('gears', 16)}</span>
			<span>Posición: &nbsp;<b class="pos">0,5</b>{@render icon('cancel')} &nbsp;&nbsp;/ 0{@render icon('gears', 16)}</span>
			<span>Gan latente: &nbsp;<b class="neg">-1,50 €</b></span>
			<span>Gan día: &nbsp;<b class="neg">-1,50 €</b></span>
		</div>

		<div class="settings">
			<div class="choices">
				<div class="combo units">
					<select aria-label="Unidades"><option>200 unidades</option></select>
					<i></i>
				</div>
				<div class="combo frame">
					<select aria-label="Periodo"><option>{c.frame}</option></select>
					<i></i>
				</div>
				<div class="indicator">
					<button aria-label="Añadir indicador">
						<svg class="icon" width="31" height="24" viewBox="0 0 31 24">{@html icons.indicator}</svg>
					</button>
					<button aria-label="Más indicadores" class="more"><span class="caret"></span></button>
				</div>
			</div>
			<div class="trading">
				<span class="fold"></span>
				<button class="square" aria-label="Ajustes de trading">{@render icon('wrench', 16)}</button>
				<label class="qty">Cant <input value="0.5" /></label>
				<div class="group">
					<span>Límite</span>
					<div>
						<button aria-label="Límite a cotización">{@render icon('limitA', 24)}</button>
						<button aria-label="Límite libre">{@render icon('limitB', 24)}</button>
					</div>
				</div>
				<div class="group">
					<span>Stop</span>
					<div>
						<button aria-label="Stop a cotización">{@render icon('stopA', 24)}</button>
						<button aria-label="Stop libre">{@render icon('stopB', 24)}</button>
					</div>
				</div>
				<div class="group deal">
					<span>Vender F.A.<em class="info">i</em></span>
					<button class="sell">12.4<strong>32,</strong><sup>7</sup></button>
				</div>
				<div class="group deal last">
					<span>Comprar F.A.<em class="info">i</em></span>
					<button class="buy">12.4<strong>34,</strong><sup>7</sup></button>
				</div>
				<div class="guards">
					{#each ['S', 'L'] as guard}
						<div>
							<label><input type="checkbox" checked />{guard}</label>
							<input class="pts" value="30" aria-label="Puntos {guard}" />
							<span>pts</span>
						</div>
					{/each}
				</div>
			</div>
		</div>

		<div class="panel">
			<svg viewBox="{c.x} 155 {c.width} 890" role="img" aria-label="Precio DAX">
				<defs>
					<linearGradient id="bull"><stop stop-color="#6cf06c" /><stop offset="1" stop-color="#44be44" /></linearGradient>
					<linearGradient id="bear"><stop stop-color="#ff8888" /><stop offset="1" stop-color="#cc5454" /></linearGradient>
					<linearGradient id="bar"><stop stop-color="#b8b8b8" /><stop offset="1" stop-color="#828282" /></linearGradient>
					<linearGradient id="back" x2="0" y2="1"><stop stop-color="#343434" /><stop offset="1" stop-color="#0b0b0b" /></linearGradient>
					<linearGradient id="pinkTag" x2="0" y2="1"><stop stop-color="#ffa0a0" /><stop offset="1" stop-color="#f47c7c" /></linearGradient>
					<linearGradient id="greenTag" x2="0" y2="1"><stop stop-color="#b4f4b4" /><stop offset="1" stop-color="#8cd48c" /></linearGradient>
					<linearGradient id="darkTag" x2="0" y2="1"><stop stop-color="#383838" /><stop offset="1" stop-color="#080808" /></linearGradient>
					<radialGradient id="dot"><stop stop-color="#ffe890" /><stop offset="1" stop-color="#f0a010" /></radialGradient>
				</defs>
				<rect x={c.x} y="155" width={c.right - c.x} height="890" fill="url(#back)" />
				{#if c.active}
					<rect x="3" y="199.500" width="784.500" height="629" fill="#7c8ab4" fill-opacity=".43" stroke="#fff" />
				{/if}
				{#each c.trend as s}
					<path d={s.d} class={s.up ? 'trend-up' : 'trend-down'} />
				{/each}
				{#each c.swing as s}
					<path d={s.d} class={s.up ? 'swing-up' : 'swing-down'} />
				{/each}
				<g shape-rendering="crispEdges">
					{#each c.candles as k, i}
						<line class="wick" x1={Math.floor(c.cx(i)) + 0.5} x2={Math.floor(c.cx(i)) + 0.5} y1={ty(k.high)} y2={ty(k.low)} />
						<rect
							class="body"
							x={Math.floor(c.cx(i)) - c.half + 0.5}
							y={Math.floor(ty(k.top)) + 0.5}
							width={c.active ? 17 : 4}
							height={Math.round((k.bottom - k.top) / 3)}
							fill={k.dir === 'g' ? 'url(#bull)' : 'url(#bear)'}
						/>
					{/each}
				</g>
				<polyline class="band rise" points={c.upper} />
				<polyline class="band drop" points={c.lower} />
				{#each c.fastLine.slice(1) as p, i}
					<line class="fast" class:fall={p[1] > c.fastLine[i][1] + 0.4} x1={c.fastLine[i][0]} y1={c.fastLine[i][1]} x2={p[0]} y2={p[1]} />
				{/each}
				{#each c.slowLine.slice(1) as p, i}
					<line class="slow" class:fall={p[1] > c.slowLine[i][1]} x1={c.slowLine[i][0]} y1={c.slowLine[i][1]} x2={p[0]} y2={p[1]} />
				{/each}
				{#each c.levels as l}
					<line x1={c.x} x2={c.right} y1={l.y} y2={l.y} stroke={l.color} stroke-width={l.w} stroke-dasharray={l.dash} />
				{/each}
				{#each c.orders as y, i}
					<line x1={c.x} x2={c.lastX} y1={y + 0.5} y2={y + 0.5} stroke="#888" />
					<line x1={c.lastX} x2={c.right} y1={i === 1 ? y : y + 0.5} y2={i === 1 ? y : y + 0.5} stroke={i === 1 ? '#00f' : '#b02828'} stroke-width={i === 1 ? 2 : 1} />
				{/each}
				<line x1={c.orderX + 0.5} x2={c.orderX + 0.5} y1={c.orders[0]} y2={c.orders[2]} stroke="#ddd" stroke-dasharray="4 4" />
				{#each c.orders as y}
					<circle cx={c.orderX + 0.5} cy={y + 0.5} r="3.500" fill="url(#dot)" />
				{/each}
				<line x1={c.high[0]} x2={c.high[2]} y1={c.high[1] + 0.5} y2={c.high[1] + 0.5} stroke="#fff" />
				{#if c.active}
					<path d="M1193 537l5 4.500-5 4.500z" fill="#30a030" />
					<text class="support" x="1139" y="1014">s4</text>
				{/if}
				<path transform="translate({c.arrow[0]} {c.arrow[1]})" d="M0 0l6 7H3v6H-3V7H-6z" fill="#40d040" stroke="#9f9" stroke-width=".5" />
				<text class="pa" x={c.pa[0]} y={c.pa[1]}>PA</text>
				{#if !c.active}
					<text class="note" x="2236" y="422">¿vela de absorcion?</text>
					<path class="mark" d="M2317 432l25 40" />
				{/if}
				<rect x={c.zeroBox + 0.5} y="1027.500" width="65" height="18" rx="2" fill="#2c562c" stroke="#38b838" />
				<text class="price" x={c.zeroBox + 3} y="1040">0@12.435,7</text>
				<text class="credit" x={c.x + 3} y="1042">© IT-Finance.com <tspan font-style="italic">&nbsp;Datos recibidos indicativos</tspan></text>

				<rect x={c.right} y="155" width="52" height="890" fill="#1d1d1d" />
				<path class="frame-line" d="M{c.x} 155.500H{c.right + 0.5}V1044.500H{c.x}" />
				{@render scale(c, c.axis)}
				{#each c.tags as tag}
					{@render tagBox(c, tag)}
				{/each}
			</svg>
			<div class="head">
				{@render tab('Precio', true)}
				<span>Día:+Alto 12.456,2 +Bajo 12.426,7</span>
			</div>
			{@render order(c.orders[0], 'V:LMT  0,5@ 12.465,7', '15,00 €', false)}
			<div class="order position" style:top="{c.orders[1] - 155 - 19}px">
				<span class="what">0,5@ 12.435,7</span>
				<button aria-label="Cerrar posición">{@render icon('cross', 10)}</button>
			</div>
			<div class="order result" style:top="{c.orders[1] - 155}px">
				<span class="gain loss">-3,0</span>
				<span class="gain loss">-1,50 €</span>
			</div>
			{@render order(c.orders[2], 'V:STP  0,5@ 12.405,7', '-15,00 €', true)}
		</div>

		<div class="panel">
			<svg viewBox="{c.x} 1047 {c.width} 88" role="img" aria-label="Volumen">
				<rect x={c.x} y="1047" width={c.right - c.x} height="88" fill="#0b0b0b" />
				<g shape-rendering="crispEdges">
					{#each c.volume as v, i}
						{#if v}
							{@const x = Math.floor(c.cx(i + c.first)) - c.half}
							{@const h = Math.round(v / 3)}
							<rect {x} y={1134 - h} width={c.active ? 18 : 4} height={h} fill="url(#bar)" />
							<rect {x} y={1134 - h} width={c.active ? 18 : 4} height="1" fill="#ddd" />
						{/if}
					{/each}
				</g>
				<rect x={c.right} y="1047" width="52" height="88" fill="#1d1d1d" />
				<path class="frame-line" d="M{c.x} 1047.500H{c.right + 0.5}V1134.500H{c.x}" />
				{@render scale(c, c.volumeAxis)}
				<g class="tag dark-grey">
					<rect x={c.right + 5.5} y="1118.500" width={c.active ? 21 : 15} height="14" />
					<text x={c.right + 7} y="1130">{c.volumeTag}</text>
				</g>
			</svg>
			<div class="head">{@render tab('Volumen', false)}</div>
		</div>

		<div class="panel">
			<svg viewBox="{c.x} 1137 {c.width} 228" role="img" aria-label="Chaikin, flujo dinero">
				<rect x={c.x} y="1137" width={c.right - c.x} height="208" fill="#030303" />
				<g shape-rendering="crispEdges">
					{#each c.flow as v, i}
						{@const h = Math.round(Math.abs(v) / 3)}
						{@const x = Math.floor(c.cx(i + c.first)) - c.half}
						{@const y = v > 0 ? c.zero - h : c.zero}
						<rect {x} {y} width={c.active ? 18 : 4} height={h} fill={v > 0 ? 'url(#bull)' : 'url(#bear)'} />
						{#if h}
							<rect {x} y={v > 0 ? y : y + h - 1} width={c.active ? 18 : 4} height="1" fill={v > 0 ? '#9f9' : '#fbb'} />
						{/if}
					{/each}
				</g>
				<line x1={c.x} x2={c.right} y1={c.zero + 0.5} y2={c.zero + 0.5} stroke="#2a2ad8" />
				{#if c.active}
					<text class="note" x="997" y="1177">Vela no cerrada, ....</text>
					<path class="mark" d="M1109 1194Q1150 1238 1209 1304" />
					<ellipse class="mark" cx="1209" cy="1301" rx="38" ry="18" />
				{:else}
					<text class="note" x="2308" y="1176">aun no ha marcado</text>
					<text class="note" x="2308" y="1199">nada</text>
					<path class="mark" d="M2408 1192l44 13" />
					<ellipse class="mark" cx="2471" cy="1229" rx="25" ry="35" />
				{/if}
				<rect x={c.right} y="1137" width="52" height="208" fill="#1d1d1d" />
				<rect x={c.x} y="1345" width={c.width} height="20" fill="#1b1b1b" />
				<path class="frame-line" d="M{c.x} 1137.500H{c.right + 0.5}V1344.500H{c.x}" />
				{@render scale(c, c.flowAxis)}
				{@render tagBox(c, c.flowTag)}
				{#each c.times as [x, label]}
					<line class="tick" x1={x + 0.5} x2={x + 0.5} y1="1345" y2="1348" />
					<text class="price time" class:bold={label === '23'} {x} y="1361">{label}</text>
				{/each}
			</svg>
			<div class="head">{@render tab('Chaikin, flujo dinero (21)', false)}</div>
		</div>

		<footer>
			<button class="share">{@render icon('share', 14)}Compartir</button>
			<button aria-label="Vincular">{@render icon(c.active ? 'linkCandles' : 'link', 22)}</button>
			<button aria-label="Informe">{@render icon('report', 20)}</button>
			<button aria-label="Libro">{@render icon('book', 16)}</button>
			<div class="scroll">
				<button aria-label="Atrás"><span class="tri back"></span></button>
				<div class="track"><span class="thumb" style:width="{c.thumb}px">≡</span></div>
				<button aria-label="Adelante"><span class="tri"></span></button>
			</div>
			<button aria-label="Estilo">{@render icon('settings', 20)}</button>
			<button aria-label="Ajustar" class:pressed={!c.active}>{@render icon('zoomFit', 20)}</button>
			<button aria-label="Alejar">{@render icon('zoomOut', 20)}</button>
			<button aria-label="Acercar">{@render icon('zoomIn', 20)}</button>
		</footer>
	</section>
{/snippet}

<div class="desktop">
	<div class="top">
		<div class="main-bar">
			<nav>
				{@render icon('candles', 16)}
				{#each menus as menu, i}
					<a href="#{menu}">{menu.slice(0, hotkeys[i])}<u>{menu[hotkeys[i]]}</u>{menu.slice(hotkeys[i] + 1)}</a>
				{/each}
				<span class="user">hermess</span>
				<span class="brand"><b>ProRealTime</b> <strong>Premium</strong></span>
				<span class="bar-controls">{@render icon('pin', 12)}<span class="min"></span>{@render closeMark()}</span>
			</nav>
			<div class="tools">
				<label class="search">
					<input placeholder="Buscar..." aria-label="Buscar" />
					<svg class="icon" width="16" height="18" viewBox="0 0 16 18"><circle cx="10" cy="6" r="5" fill="#222" stroke="#aaa" /><path d="M7 10l-5 6" stroke="#aaa" stroke-width="2" /></svg>
				</label>
				<button class="tool first" aria-label="Ventanas">{@render icon('windows', 22)}</button>
				<button class="tool" aria-label="Vincular">{@render icon('link', 22)}</button>
				<div class="toolset">
					{#each tools as tool}
						<button class="tool" class:pressed={tool === 'cursor' || tool === 'pattern'} aria-label={tool}>{@render icon(tool, 22)}</button>
					{/each}
				</div>
				<div class="palette">
					{#each palette as color}
						<button style:background-color={color} aria-label="Color {color}"></button>
					{/each}
				</div>
				<button class="pill">Push+ {@render icon('candlesPush', 16)}</button>
				<button class="pill light">DealThru {@render icon('flash', 18)}</button>
			</div>
		</div>
		<div class="browser">
			<div class="browser-title">
				<svg width="102" height="12" viewBox="0 0 102 12"><path d="M1 6.500h10M47.500 3.500h7v7h-7zM49.500 3v-2h7v7h-2M91 1l10 10m0-10L91 11" fill="none" stroke="#777" /></svg>
			</div>
			<div class="browser-tabs"></div>
			<div class="browser-tools">
				<svg width="100" height="8" viewBox="0 0 100 8"><circle cx="5" cy="5" r="4" fill="none" stroke="#3a70e0" /><circle cx="38" cy="6" r="6" fill="#e4e4e4" stroke="#999" /><path d="M58.500 1.500h42v9h-42z" fill="#ddd" stroke="#aaa" /><path d="M59 2h10v8H59z" fill="#3c3" /></svg>
			</div>
		</div>
	</div>

	<main>
		{#each charts as c}
			<div class="slot">{@render chartWindow(c)}</div>
		{/each}
	</main>

	<div class="taskbar">
		<button class="start" aria-label="Inicio">{@render icon('start', 19)}</button>
		<label class="cortana">
			<span class="ring"></span>
			<input placeholder="Escribe aquí para buscar" aria-label="Escribe aquí para buscar" />
			{@render icon('mic', 18)}
		</label>
		{#each apps as app}
			<button class="app" class:running={['balls', 'agent', 'candles'].includes(app)} class:current={app === 'candles'} aria-label={app}>
				{@render icon(app, app === 'taskview' ? 19 : 23)}
			</button>
		{/each}
		<div class="tray">
			<span class="people">{@render icon('people', 17)}</span>
			{@render icon('chevron', 14)}
			{@render icon('wifi', 14)}
			{@render icon('speaker', 17)}
			<span class="lang">ESP</span>
			<time>8:50<br />23/09/2019</time>
			<span class="alerts">{@render icon('note', 18)}<i>3</i></span>
		</div>
	</div>
</div>

<style>
	:global(body) {
		margin: 0;
		background: #000;
		overflow-x: hidden;
	}

	.desktop {
		font: 11px/14px 'Liberation Sans', Arial, sans-serif;
		color: #ddd;
		overflow: hidden;
	}

	button,
	input,
	select {
		font: inherit;
		color: inherit;
		border: 0;
		padding: 0;
		margin: 0;
		background: none;
		box-sizing: border-box;
	}

	button {
		display: flex;
		align-items: center;
		justify-content: center;
	}

	.icon {
		display: block;
		flex: none;
	}

	.top,
	main {
		display: grid;
		grid-template-columns: 1340fr 1220fr;
	}

	.main-bar {
		height: 60px;
		box-sizing: border-box;
		border-left: 1px solid #555;
		background: #000;
		min-width: 0;
	}

	nav {
		display: flex;
		align-items: center;
		gap: 12px;
		height: 25px;
		padding: 0 6px 0 3px;
		background: linear-gradient(#333, #080808);
		border-top: 1px solid #444;
		box-sizing: border-box;
	}

	nav a {
		color: #ddd;
		text-decoration: none;
	}

	nav .icon + a {
		margin-left: -4px;
	}

	.user {
		margin-left: auto;
		padding-left: 7px;
		border-left: 1px solid #555;
		line-height: 22px;
	}

	.brand {
		background: #282e36;
		padding: 0 8px;
		line-height: 22px;
		margin-left: -4px;
		border-radius: 3px;
		word-spacing: normal;
	}

	.brand b {
		color: #9be32c;
	}

	.brand strong {
		color: #fff;
	}

	.bar-controls {
		display: flex;
		align-items: center;
		gap: 7px;
		color: #777;
		margin-left: -9px;
	}

	.tools {
		display: flex;
		align-items: center;
		height: 33px;
		padding: 0 6px 0 7px;
		background: linear-gradient(#1c1c1c, #0c0c0c);
		border-top: 1px solid #444;
	}

	.search {
		display: flex;
		align-items: center;
		width: 200px;
		height: 22px;
		box-sizing: border-box;
		border: 1px solid #555;
		border-radius: 3px;
		padding: 0 3px;
		background: #111;
	}

	.search input {
		flex: 1;
		min-width: 0;
	}

	.search input::placeholder {
		font-style: italic;
		color: #777;
		opacity: 1;
	}

	.tool {
		width: 26px;
		height: 26px;
		flex: none;
	}

	.tool.first {
		width: 28px;
	}

	.toolset {
		display: flex;
		margin-left: 12px;
	}

	.pressed {
		background: #6e6e6e;
	}

	.palette {
		display: grid;
		grid-template-columns: repeat(14, 11px);
		gap: 1px 0;
		margin-left: 2px;
	}

	.palette button {
		height: 11px;
		border: 1px solid #111;
		border-radius: 2px;
		box-shadow: inset 0 2px 1px rgba(255, 255, 255, 0.4);
	}

	.pill {
		width: 62px;
		height: 24px;
		gap: 4px;
		margin-left: auto;
		border: 1px solid #2c8c2c;
		border-radius: 4px;
		background: linear-gradient(#68dc68, #38c038);
		color: #111;
	}

	.pill.light {
		width: 74px;
		margin-left: 1px;
		background: linear-gradient(#98e898, #70d470);
	}

	.browser {
		display: flex;
		flex-direction: column;
		height: 59px;
		background: #efefef;
	}

	.browser-title {
		height: 23px;
		background: #fff;
	}

	.browser-title svg {
		float: right;
		margin: 4px 20px 0 0;
	}

	.browser-tabs {
		height: 20px;
		border-bottom: 1px solid #aaa;
	}

	.browser-tools {
		display: flex;
		flex: 1;
		align-items: flex-end;
		justify-content: flex-end;
		padding-right: 5px;
	}

	main {
		grid-template-columns: 1316fr 1244fr;
	}

	.slot {
		min-width: 0;
	}

	.window {
		box-sizing: border-box;
		border: solid #505050;
		border-width: 1px 4px 4px 1px;
		padding-left: 4px;
		background: #161616;
	}

	.window.wide {
		width: calc(100% + 19px);
		border-color: #303030;
	}

	.window.active {
		border-color: #707070;
		box-shadow: inset 3px 0 #707070;
	}

	.title {
		display: flex;
		align-items: center;
		height: 22px;
		gap: 4px;
		border-bottom: 1px solid #555;
		background: linear-gradient(#343434, #060606);
	}

	.title > span {
		line-height: 12px;
	}

	.active .title {
		background: linear-gradient(#8c8c8c, #606060);
		color: #fff;
		font-weight: bold;
	}

	.caret {
		border: 4px solid transparent;
		border-top-color: #eee;
		border-bottom: 0;
	}

	.info {
		width: 11px;
		margin: 0 4px 0 9px;
		background: #445;
		color: #fff;
		font: bold 11px/12px 'Liberation Serif', serif;
		text-align: center;
	}

	.title > .quote {
		padding: 0 2px;
		line-height: 20px;
		color: #f04040;
	}

	.active .title > .quote {
		background: #f85858;
		color: #fff;
	}

	.title b {
		color: #eee;
	}

	.controls {
		display: flex;
		align-items: center;
		gap: 7px;
		height: 22px;
		margin-left: auto;
		padding: 0 2px 0 6px;
		background: linear-gradient(#8c8c8c, #606060);
		color: #fff;
	}

	.min {
		width: 8px;
		height: 8px;
		border-bottom: 2px solid;
	}

	.max {
		width: 8px;
		height: 8px;
		border: 1px solid;
		border-top-width: 2px;
		box-sizing: border-box;
	}

	.account {
		display: grid;
		grid-template-columns: 174fr auto 179fr auto 182fr auto 175fr auto 187fr;
		height: 22px;
		border-bottom: 1px solid #555;
		background: #080808;
	}

	.account span {
		display: flex;
		align-items: center;
	}

	.account span:nth-child(1),
	.combo.units {
		grid-column: 2;
	}

	.account span:nth-child(2),
	.combo.frame {
		grid-column: 4;
	}

	.account span:nth-child(3),
	.indicator {
		grid-column: 6;
	}

	.account span:nth-child(4) {
		grid-column: 8;
	}

	.account .icon {
		margin-left: 2px;
	}

	.pos {
		color: #28d028;
	}

	.neg {
		color: #f04040;
	}

	.settings {
		display: flex;
		height: 48px;
		background: linear-gradient(#060606, #1c1c1c);
	}

	.choices {
		flex: 1;
		display: grid;
		grid-template-columns: 134fr auto 172fr auto 174fr auto 138fr;
		align-items: center;
		padding-bottom: 2px;
	}

	.combo {
		display: flex;
		align-items: center;
		width: 101px;
		height: 22px;
		box-sizing: border-box;
		border: 1px solid #555;
		border-radius: 3px;
		background: #111;
	}

	.combo.frame {
		width: 92px;
	}

	.combo select {
		flex: 1;
		min-width: 0;
		height: 20px;
		padding-left: 3px;
		appearance: none;
	}

	.combo i {
		display: flex;
		align-items: center;
		justify-content: center;
		width: 16px;
		height: 18px;
		background: #2c2c2c;
	}

	.combo i::after {
		content: '';
		border: 4px solid transparent;
		border-top: 5px solid #eee;
		border-bottom: 0;
	}

	.indicator {
		display: flex;
		height: 27px;
		box-sizing: border-box;
		border: 1px solid #444;
		border-radius: 3px;
		background: #222;
		overflow: hidden;
	}

	.indicator .more {
		width: 13px;
		border-left: 1px solid #444;
	}

	.trading {
		display: flex;
		align-items: flex-start;
		flex: none;
		width: 448px;
		background: #1c1c1c;
		border-radius: 8px;
		box-shadow: -1px 0 #555;
	}

	.fold {
		margin: 20px 3px 0 4px;
		border: 4px solid transparent;
		border-left: 5px solid #eee;
		border-right: 0;
	}

	.square {
		width: 18px;
		height: 18px;
		margin-top: 14px;
		border: 1px solid #444;
		border-radius: 3px;
		background: #111;
	}

	.qty {
		width: 46px;
		margin: 0 4px;
		text-align: center;
	}

	.qty input,
	.guards .pts {
		width: 46px;
		height: 22px;
		border: 1px solid #555;
		border-radius: 3px;
		background: #161616;
		text-align: right;
		padding-right: 4px;
	}

	.group {
		padding: 0 4px;
		border-left: 1px solid #444;
		text-align: center;
	}

	.group > span {
		display: flex;
		justify-content: center;
		white-space: nowrap;
	}

	.group > div {
		display: flex;
		gap: 3px;
		margin-top: 1px;
	}

	.group > div button {
		width: 27px;
		height: 28px;
		border: 1px solid #555;
		border-radius: 3px;
		background: #161616;
	}

	.group .info {
		width: 9px;
		margin: 0 0 0 2px;
	}

	.deal {
		padding: 0 0 0 2px;
	}

	.deal.last {
		padding: 0 3px;
		border: 0;
		border-right: 1px solid #444;
	}

	.deal button {
		width: 76px;
		height: 28px;
		margin-top: 1px;
		align-items: baseline;
		border-radius: 3px;
		color: #fff;
	}

	.deal strong {
		font: 20px/28px 'Liberation Sans', Arial, sans-serif;
	}

	.deal sup {
		font-size: 12px;
		line-height: 12px;
		align-self: flex-start;
		margin-top: 4px;
	}

	.sell {
		background: linear-gradient(#dc4444, #b42020);
	}

	.buy {
		background: linear-gradient(#28b028, #089008);
	}

	.guards {
		display: grid;
		padding-left: 4px;
	}

	.guards div {
		display: flex;
		align-items: center;
		gap: 2px;
		height: 23px;
	}

	.guards label {
		display: flex;
		align-items: center;
		gap: 3px;
		width: 24px;
	}

	.guards input[type='checkbox'] {
		width: 13px;
		height: 13px;
		appearance: none;
		border: 1px solid #555;
		background: #333;
	}

	.guards input[type='checkbox']::after {
		content: '✓';
		display: block;
		font: bold 12px/10px 'DejaVu Sans', sans-serif;
	}

	.guards .pts {
		width: 18px;
		height: 22px;
		padding: 0;
		text-align: center;
	}

	.panel {
		position: relative;
		margin-bottom: 2px;
	}

	.panel > svg {
		display: block;
		width: 100%;
		height: auto;
	}

	.panel:nth-last-child(2) {
		margin: 0;
	}

	.head {
		position: absolute;
		top: 0;
		left: 0;
		display: flex;
		align-items: center;
		gap: 4px;
		color: #bbb;
	}

	.tab {
		display: flex;
		align-items: center;
		gap: 3px;
		height: 17px;
		padding: 0 2px 0 3px;
		border-right: 1px solid #555;
		border-bottom: 1px solid #555;
		background: linear-gradient(#101010, #262626);
		color: #ddd;
	}

	.order {
		position: absolute;
		left: 0;
		display: flex;
		height: 20px;
		line-height: 18px;
		white-space: pre;
	}

	.order > * {
		box-sizing: border-box;
		height: 20px;
		border: 1px solid #666;
		background: linear-gradient(#484848, #242424);
		padding: 0 3px;
	}

	.order .grip {
		display: flex;
		align-items: center;
		padding: 0 2px;
		border-color: #a00;
		border-radius: 3px 0 0 3px;
		background: #b00808;
	}

	.order .what {
		border-color: #a00;
		background: linear-gradient(#cc4c4c, #a82c2c);
		color: #eee;
	}

	.order .gain {
		border-left: 0;
		border-right: 0;
		color: #28c028;
	}

	.order .gain.loss {
		color: #e84040;
	}

	.order button {
		width: 18px;
		border-radius: 0 4px 0 0;
	}

	.order.position .what {
		border-color: #0a800a;
		background: linear-gradient(#34a034, #188418);
		font-weight: bold;
	}

	.order.result .gain {
		border: 1px solid #666;
	}

	.trend-up {
		fill: rgba(0, 100, 0, 0.55);
	}

	.trend-down {
		fill: rgba(100, 0, 0, 0.55);
	}

	.swing-up {
		fill: rgba(68, 208, 108, 0.73);
	}

	.swing-down {
		fill: rgba(211, 140, 145, 0.73);
	}

	.wick,
	.body {
		stroke: #fff;
	}

	.band {
		fill: none;
		stroke-dasharray: 4 4;
	}

	.band.rise {
		stroke: #34f034;
	}

	.band.drop {
		stroke: #f03030;
	}

	.fast {
		stroke: #10e010;
		stroke-width: 1.2;
	}

	.fast.fall {
		stroke: #f01840;
	}

	.slow {
		stroke: #34ff04;
		stroke-width: 2;
		stroke-linecap: round;
	}

	.slow.fall {
		stroke: #f00;
	}

	.frame-line {
		fill: none;
		stroke: #666;
	}

	.tick {
		stroke: #666;
	}

	.price,
	.credit {
		fill: #d0d0d0;
	}

	.price.bold {
		font-weight: bold;
		font-size: 12px;
	}

	.price.time {
		text-anchor: middle;
	}

	.pa,
	.support {
		fill: #94900c;
		font-weight: bold;
		font-size: 16px;
		text-anchor: middle;
	}

	.support {
		fill: #900;
		font-size: 12px;
	}

	.note {
		fill: #fff200;
		font: bold 18px Lato, sans-serif;
	}

	.mark {
		fill: none;
		stroke: #fff200;
		stroke-width: 4;
		stroke-linecap: round;
	}

	.tag rect {
		fill: url(#darkTag);
		stroke: #666;
	}

	.tag text {
		fill: #111;
	}

	.tag.pink rect {
		fill: url(#pinkTag);
	}

	.tag.green rect {
		fill: url(#greenTag);
	}

	.tag.yellow rect {
		fill: #fcd010;
	}

	.tag.dark-green text {
		fill: #30e830;
	}

	.tag.dark-red text {
		fill: #f03434;
	}

	.tag.dark-crimson text {
		fill: #e01840;
	}

	.tag.dark-grey text {
		fill: #aaa;
	}

	footer {
		display: flex;
		align-items: center;
		gap: 4px;
		height: 30px;
		padding-top: 3px;
		border-top: 1px solid #555;
		box-sizing: border-box;
		background: #141414;
	}

	footer > button {
		flex: none;
		width: 24px;
		height: 24px;
	}

	footer .share {
		width: 72px;
		height: 22px;
		gap: 5px;
		border-radius: 3px;
		border: 1px solid #1860a0;
		background: linear-gradient(#3090d0, #1c68a8);
		color: #e4e4e4;
	}

	.scroll {
		display: flex;
		flex: 1;
		height: 16px;
		box-sizing: border-box;
		border: 1px solid #555;
		border-radius: 3px;
		background: #050505;
	}

	.scroll button {
		width: 15px;
		background: #1c1c1c;
	}

	.track {
		flex: 1;
		display: flex;
		justify-content: flex-end;
	}

	.thumb {
		background: #1e1e1e;
		border: solid #444;
		border-width: 0 1px;
		box-sizing: border-box;
		text-align: center;
		color: #777;
	}

	.tri {
		border: 4px solid transparent;
		border-left-color: #eee;
		border-right: 0;
	}

	.tri.back {
		border-left: 0;
		border-right: 4px solid #eee;
	}

	.taskbar {
		display: flex;
		align-items: stretch;
		height: 40px;
		border-top: 1px solid #222;
		background: linear-gradient(90deg, #060a10, #08141f 50%, #050a12);
		font-family: 'Open Sans', sans-serif;
		color: #fff;
	}

	.start {
		width: 48px;
	}

	.cortana {
		display: flex;
		align-items: center;
		gap: 10px;
		width: 344px;
		box-sizing: border-box;
		padding: 0 12px 0 9px;
		background: #f2f2f2;
	}

	.cortana input {
		flex: 1;
		font-size: 14px;
	}

	.cortana input::placeholder {
		color: #333;
		opacity: 1;
	}

	.ring {
		width: 21px;
		height: 21px;
		border: 3px solid #111;
		border-radius: 50%;
		box-sizing: border-box;
	}

	.app {
		width: 49px;
	}

	.running {
		box-shadow: inset 0 -2px #76b9ed;
	}

	.current {
		background: #3a4148;
	}

	.tray {
		display: flex;
		align-items: center;
		gap: 10px;
		margin-left: auto;
		padding-right: 17px;
		font-size: 12px;
	}

	.people {
		margin-right: 10px;
	}

	.tray time {
		width: 70px;
		line-height: 18px;
		text-align: center;
	}

	.alerts {
		position: relative;
		padding: 0 6px 0 3px;
	}

	.alerts i {
		position: absolute;
		left: 13px;
		top: 8px;
		width: 14px;
		height: 14px;
		border-radius: 50%;
		background: #445;
		font: 10px/14px 'Open Sans', sans-serif;
		text-align: center;
	}
</style>
